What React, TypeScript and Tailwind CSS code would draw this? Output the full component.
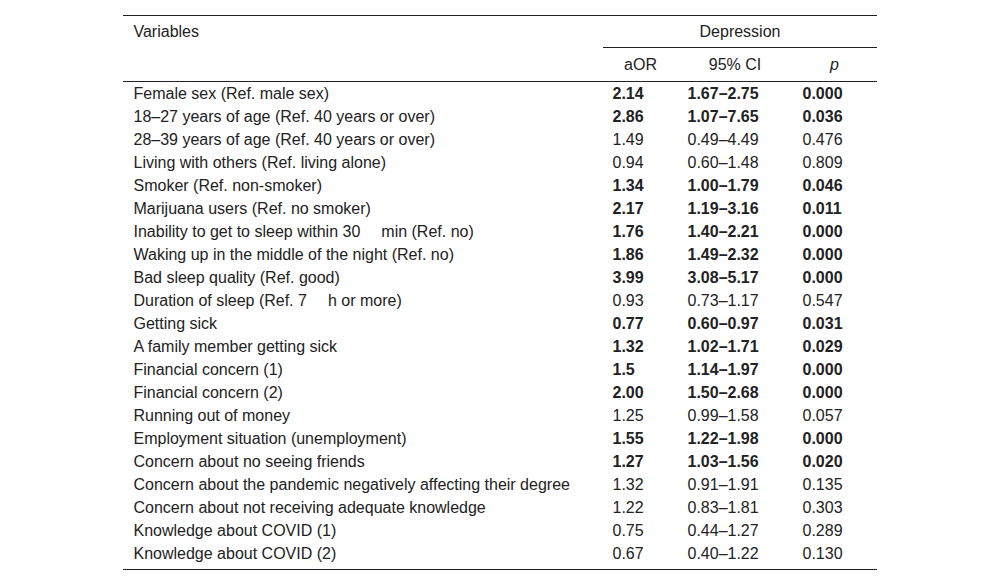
type Row = {
  label: React.ReactNode;
  aor: string;
  ci: string;
  p: string;
  bold?: boolean;
};

const gap = <span className="inline-block w-[21px]" />;

const rows: Row[] = [
  { label: "Female sex (Ref. male sex)", aor: "2.14", ci: "1.67–2.75", p: "0.000", bold: true },
  { label: "18–27 years of age (Ref. 40 years or over)", aor: "2.86", ci: "1.07–7.65", p: "0.036", bold: true },
  { label: "28–39 years of age (Ref. 40 years or over)", aor: "1.49", ci: "0.49–4.49", p: "0.476" },
  { label: "Living with others (Ref. living alone)", aor: "0.94", ci: "0.60–1.48", p: "0.809" },
  { label: "Smoker (Ref. non-smoker)", aor: "1.34", ci: "1.00–1.79", p: "0.046", bold: true },
  { label: "Marijuana users (Ref. no smoker)", aor: "2.17", ci: "1.19–3.16", p: "0.011", bold: true },
  {
    label: (
      <>
        Inability to get to sleep within 30{gap}min (Ref. no)
      </>
    ),
    aor: "1.76",
    ci: "1.40–2.21",
    p: "0.000",
    bold: true,
  },
  { label: "Waking up in the middle of the night (Ref. no)", aor: "1.86", ci: "1.49–2.32", p: "0.000", bold: true },
  { label: "Bad sleep quality (Ref. good)", aor: "3.99", ci: "3.08–5.17", p: "0.000", bold: true },
  {
    label: (
      <>
        Duration of sleep (Ref. 7{gap}h or more)
      </>
    ),
    aor: "0.93",
    ci: "0.73–1.17",
    p: "0.547",
  },
  { label: "Getting sick", aor: "0.77", ci: "0.60–0.97", p: "0.031", bold: true },
  { label: "A family member getting sick", aor: "1.32", ci: "1.02–1.71", p: "0.029", bold: true },
  { label: "Financial concern (1)", aor: "1.5", ci: "1.14–1.97", p: "0.000", bold: true },
  { label: "Financial concern (2)", aor: "2.00", ci: "1.50–2.68", p: "0.000", bold: true },
  { label: "Running out of money", aor: "1.25", ci: "0.99–1.58", p: "0.057" },
  { label: "Employment situation (unemployment)", aor: "1.55", ci: "1.22–1.98", p: "0.000", bold: true },
  { label: "Concern about no seeing friends", aor: "1.27", ci: "1.03–1.56", p: "0.020", bold: true },
  { label: "Concern about the pandemic negatively affecting their degree", aor: "1.32", ci: "0.91–1.91", p: "0.135" },
  { label: "Concern about not receiving adequate knowledge", aor: "1.22", ci: "0.83–1.81", p: "0.303" },
  { label: "Knowledge about COVID (1)", aor: "0.75", ci: "0.44–1.27", p: "0.289" },
  { label: "Knowledge about COVID (2)", aor: "0.67", ci: "0.40–1.22", p: "0.130" },
];

export default function App() {
  return (
    <div className="min-h-[586px] bg-white pt-[15px] text-[16px] text-[#222] font-['Liberation_Sans',Arial,sans-serif]">
      <table className="mx-auto w-[753px] table-fixed border-collapse border-y border-[#222]">
        <colgroup>
          <col className="w-[480px]" />
          <col className="w-[74px]" />
          <col className="w-[115px]" />
          <col className="w-[84px]" />
        </colgroup>
        <thead>
          <tr className="h-[32px]">
            <th rowSpan={2} className="border-b border-[#222] pl-[10px] pt-[7px] text-left align-top font-normal leading-[18px]">
              Variables
            </th>
            <th colSpan={3} className="border-b border-[#222] text-center font-normal leading-[18px]">
              Depression
            </th>
          </tr>
          <tr className="h-[34px] border-b border-[#222]">
            <th className="text-center font-normal leading-[18px]">aOR</th>
            <th className="text-center font-normal leading-[18px]">95% CI</th>
            <th className="text-center font-normal italic leading-[18px]">p</th>
          </tr>
        </thead>
        <tbody>
          {rows.map((r, i) => {
            const last = i === rows.length - 1;
            const val = `text-left leading-[23px] ${r.bold ? "font-bold" : ""} ${last ? "pb-[4px]" : ""}`;
            return (
              <tr key={i}>
                <td className={`pl-[10px] leading-[23px] whitespace-nowrap ${last ? "pb-[4px]" : ""}`}>{r.label}</td>
                <td className={`${val} pl-[9px]`}>{r.aor}</td>
                <td className={`${val} pl-[10px]`}>{r.ci}</td>
                <td className={`${val} pl-[10px]`}>{r.p}</td>
              </tr>
            );
          })}
        </tbody>
      </table>
    </div>
  );
}
